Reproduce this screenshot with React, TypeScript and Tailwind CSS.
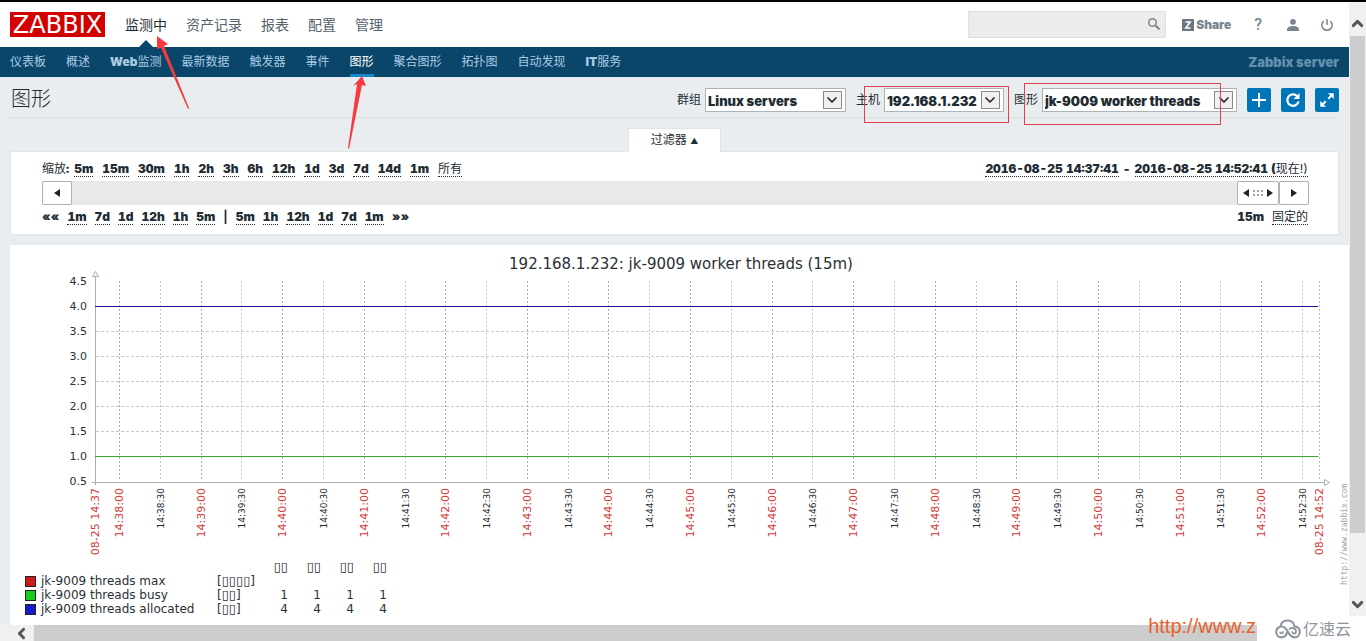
import { ChevronDown, ChevronLeft, ChevronUp } from 'lucide-react'

interface PickerProps {
  id: string;
  label: string;
  value: string;
  width: string;
  marked?: string;
}

const mainMenu = ['监测中', '资产记录', '报表', '配置', '管理']
const subMenu = ['仪表板', '概述', 'Web监测', '最新数据', '触发器', '事件', '图形', '聚合图形', '拓扑图', '自动发现', 'IT服务']
const zoomLinks = ['5m', '15m', '30m', '1h', '2h', '3h', '6h', '12h', '1d', '3d', '7d', '14d', '1m']
const backLinks = ['1m', '7d', '1d', '12h', '1h', '5m']
const forwardLinks = ['5m', '1h', '12h', '1d', '7d', '1m']

const legend = [
  { name: 'jk-9009 threads max', fn: '▯▯▯▯', color: 'bg-[#cc1a1a]', values: ['', '', '', ''] },
  { name: 'jk-9009 threads busy', fn: '▯▯', color: 'bg-[#1acc1a]', values: ['1', '1', '1', '1'] },
  { name: 'jk-9009 threads allocated', fn: '▯▯', color: 'bg-[#1a1acc]', values: ['4', '4', '4', '4'] },
]

// one tick every 30 seconds, 14:38:00 - 14:52:30
const ticks = Array.from({ length: 30 }, (_, i) => ({
  x: Math.round(109 + i * 40.79) + 0.5,
  major: i % 2 === 0,
  label: `14:${38 + Math.floor(i / 2)}:${i % 2 === 0 ? '00' : '30'}`,
}))

const yLabels = ['4.5', '4.0', '3.5', '3.0', '2.5', '2.0', '1.5', '1.0', '0.5']

function Picker({ id, label, value, width, marked }: PickerProps) {
  return (
    <div className="relative flex items-center gap-1">
      <label htmlFor={id} className="font-normal">{label}</label>
      <div className={`relative h-6 ${width}`}>
        <select id={id} className="h-full w-full appearance-none border border-[#acb3b8] bg-white pt-[2px] pl-[2px] text-[13px] outline-none">
          <option>{value}</option>
        </select>
        <span className="pointer-events-none absolute top-[3px] right-[4px] flex h-[18px] w-[19px] items-center justify-center border border-[#8a8a8a] bg-[#f0f0f0]">
          <ChevronDown size={16} strokeWidth={2.5} className="shrink-0 text-[#222]" />
        </span>
      </div>
      {marked && <span className={`pointer-events-none absolute border border-[#d9444f] ${marked}`} />}
    </div>
  )
}

function TimeLink({ text, suffix }: { text?: string; suffix?: string }) {
  return (
    <button className="h-4 cursor-pointer border-b border-dotted border-[#1f2c33] leading-[15px]">
      {text}
      {suffix && <span className="font-normal">{suffix}</span>}
    </button>
  )
}

function Graph() {
  return (
    <svg viewBox="0 0 1339 315" className="block w-full overflow-visible" fontFamily="'DejaVu Sans', sans-serif">
      <text x="671" y="24" textAnchor="middle" fontSize="15" fill="#2a3036">192.168.1.232: jk-9009 worker threads (15m)</text>

      {/* grid */}
      {yLabels.map((label, i) => (
        <g key={label}>
          {i > 1 && i < 8 && (
            <line x1="86" x2="1309" y1={36.5 + i * 25} y2={36.5 + i * 25} stroke="#c8c8c8" strokeDasharray="3 2" />
          )}
          <text x="77" y={40 + i * 25} textAnchor="end" fontSize="11" fill="#2a3036">{label}</text>
        </g>
      ))}
      {ticks.map(t => (
        <g key={t.label}>
          <line x1={t.x} x2={t.x} y1="36" y2="236" stroke={t.major ? '#ababab' : '#c8c8c8'} strokeDasharray="2 2" />
          <text
            transform={`translate(${t.x + 3} 243) rotate(-90)`}
            textAnchor="end"
            fontSize={t.major ? 11 : 9}
            fill={t.major ? '#d23a3a' : '#22282c'}
          >
            {t.label}
          </text>
        </g>
      ))}
      <line x1="1309.5" x2="1309.5" y1="36" y2="236" stroke="#b8b8b8" strokeDasharray="2 2" />
      <text transform="translate(89 243) rotate(-90)" textAnchor="end" fontSize="11" fill="#d23a3a">08-25 14:37</text>
      <text transform="translate(1313 243) rotate(-90)" textAnchor="end" fontSize="11" fill="#d23a3a">08-25 14:52</text>

      {/* axes */}
      <path d="M85.5 31V240M82 237.5H1314" stroke="#a3b0ba" fill="none" />
      <path d="M82.5 31.5L85.5 26.5L88.5 31.5Z" stroke="#a3b0ba" fill="#fff" />
      <path d="M1314.5 234.5L1319.5 237.5L1314.5 240.5Z" stroke="#a3b0ba" fill="#fff" />

      {/* values */}
      <line x1="85" x2="1308" y1="61.5" y2="61.5" stroke="#1a1490" />
      <line x1="85" x2="1308" y1="211.5" y2="211.5" stroke="#33aa33" />

      <text
        transform="translate(1337 340) rotate(-90)"
        fontSize="8"
        fontFamily="'DejaVu Sans Mono', monospace"
        fill="#a4a4a4"
      >
        http://www.zabbix.com
      </text>
    </svg>
  )
}

export default function App() {
  return (
    <div className="relative flex min-h-screen flex-col bg-[#e9edf0] font-[Inter,'Noto_Sans_CJK_SC',sans-serif] text-[12px] leading-4 font-black text-[#1f2c33]">
      <div className="h-[2px] bg-black" />
      <div className="flex flex-1">
        <div className="flex min-w-0 flex-1 flex-col">
          {/* Header */}
          <header className="flex h-[45px] items-center justify-between bg-white pr-[15px] pl-[10px]">
            <div className="flex items-center gap-5">
              <a href="#" className="flex h-[25px] w-[95px] items-center justify-center bg-[#d40000] font-['DejaVu_Sans',sans-serif] text-[24px] leading-6 font-normal text-white">ZABBIX</a>
              <nav className="flex gap-[19px] text-[14px] leading-5 font-normal text-[#55626c]">
                {mainMenu.map((item, i) => (
                  <a key={item} href="#" className={i === 0 ? 'relative text-[#1f2c33]' : ''}>
                    {item}
                    {i === 0 && (
                      <>
                        <svg width="16" height="8" className="absolute top-[25px] left-[13px]"><path d="M0 8L8 0L16 8Z" fill="#0a466a" /></svg>
                        <svg width="36" height="76" className="absolute top-[20px] left-[29px] z-10">
                          <path d="M3 1L14 9L10 11L35 73L34 74L7 13L3 14Z" fill="#f73a3f" />
                        </svg>
                      </>
                    )}
                  </a>
                ))}
              </nav>
            </div>
            <div className="flex items-center text-[#7a868f]">
              <div className="relative mr-4">
                <input type="text" aria-label="搜索" className="block h-[27px] w-[198px] border border-[#e0e0e0] bg-[#ececec] px-2 outline-none" />
                <svg width="14" height="14" viewBox="0 0 14 14" className="absolute top-[6px] right-[5px]" fill="none" stroke="#7a868f">
                  <circle cx="5.5" cy="5.5" r="3.8" strokeWidth="1.5" />
                  <path d="M8.5 8.5L12.5 12.5" strokeWidth="2" />
                </svg>
              </div>
              <a href="#" className="mr-[23px] flex items-center gap-[2px]">
                <svg width="12" height="12" viewBox="0 0 12 12">
                  <rect width="12" height="12" fill="#6c7881" />
                  <path d="M3.5 3H8.2L3.8 9H8.5" fill="none" stroke="#fff" strokeWidth="1.6" />
                </svg>
                Share
              </a>
              <a href="#" className="mr-6 font-[Roboto,sans-serif] text-[16px] leading-5 font-medium">?</a>
              <a href="#" aria-label="profile" className="mr-5">
                <svg width="14" height="14" viewBox="0 0 14 14" fill="#7a868f">
                  <circle cx="7" cy="3.8" r="2.9" />
                  <path d="M1 13V11.5C1 9 4 8 7 8S13 9 13 11.5V13Z" />
                </svg>
              </a>
              <a href="#" aria-label="logout">
                <svg width="14" height="14" viewBox="0 0 14 14" fill="none" stroke="#7a868f" strokeWidth="1.5">
                  <path d="M7 1V7M3.8 3A5.2 5.2 0 1 0 10.2 3" />
                </svg>
              </a>
            </div>
          </header>

          {/* Sub navigation */}
          <nav className="flex h-[30px] justify-between bg-[#0a466a] px-[10px] text-[#a9cbe2]">
            <div className="flex gap-5">
              {subMenu.map(item => (
                <a key={item} href="#" className={item === '图形' ? 'relative h-full border-b-3 border-[#1888cc] pt-[7px] text-white' : 'pt-[7px]'}>
                  {/^[A-Z]/.test(item) ? item.replace(/[^A-Za-z]/g, '') : ''}
                  <span className="font-normal">{item.replace(/[A-Za-z]/g, '')}</span>
                  {item === '图形' && (
                    <svg width="20" height="76" className="absolute top-[28px] left-[-3px] z-10">
                      <path d="M15 1L19 11L15 10L2 74L1 73L10 9L6 11Z" fill="#f73a3f" />
                    </svg>
                  )}
                </a>
              ))}
            </div>
            <span className="pt-[7px] text-[13px] text-[#6290ad]">Zabbix server</span>
          </nav>

          {/* Title and pickers */}
          <div className="mr-[10px] ml-2 flex h-[41px] items-center justify-between border-b border-[#dbe1e5] pb-1">
            <h1 className="ml-[3px] pt-2 text-[20px] leading-6 font-light">图形</h1>
            <div className="flex items-center gap-[10px] pt-[10px]">
              <Picker id="group" label="群组" value="Linux servers" width="w-[141px]" />
              <Picker id="host" label="主机" value="192.168.1.232" width="w-[120px]" marked="-top-[2px] -right-[5px] left-[8px] h-[37px]" />
              <Picker id="graph" label="图形" value="jk-9009 worker threads" width="w-[195px]" marked="-top-[5px] right-[16px] h-[42px] w-[197px]" />
              <button aria-label="add" className="flex size-6 items-center justify-center rounded-xs bg-[#0275b8]">
                <svg width="16" height="16" viewBox="0 0 16 16" stroke="#fff" strokeWidth="2"><path d="M8 1V15M1 8H15" /></svg>
              </button>
              <button aria-label="reset" className="flex size-6 items-center justify-center rounded-xs bg-[#0275b8]">
                <svg width="16" height="16" viewBox="0 0 16 16" fill="none" stroke="#fff" strokeWidth="2.2">
                  <path d="M13.6 9.5A5.7 5.7 0 1 1 12 4" />
                  <path d="M14.5 1V7H8.5Z" fill="#fff" stroke="none" />
                </svg>
              </button>
              <button aria-label="fullscreen" className="flex size-6 items-center justify-center rounded-xs bg-[#0275b8]">
                <svg width="16" height="16" viewBox="0 0 16 16" fill="#fff" stroke="#fff">
                  <path d="M9.5 1.5H14.5V6.5Z" strokeWidth="0.5" />
                  <path d="M1.5 9.5V14.5H6.5Z" strokeWidth="0.5" />
                  <path d="M12.5 3.5L9.3 6.7M3.5 12.5L6.7 9.3" strokeWidth="2" />
                </svg>
              </button>
            </div>
          </div>

          {/* Filter */}
          <section className="mr-[10px] ml-[10px] flex flex-col items-center pt-[10px]">
            <button className="relative -mb-px h-6 w-[93px] border border-b-0 border-[#dfe4e7] bg-white font-normal">
              过滤器 <span className="text-[8px]">▲</span>
            </button>
            <div className="h-[84px] w-full border border-[#dfe4e7] bg-white pt-[9px] pr-[30px] pl-[31px] tabular-nums">
              <div className="flex h-5 justify-between">
                <div className="flex gap-[9px]">
                  <span className="-mr-1"><span className="font-normal">缩放</span>:</span>
                  {zoomLinks.map(text => <TimeLink key={text} text={text} />)}
                  <TimeLink suffix="所有" />
                </div>
                <div className="flex gap-1">
                  <TimeLink text="2016-08-25 14:37:41" />
                  -
                  <TimeLink text="2016-08-25 14:52:41 (" suffix="现在!)" />
                </div>
              </div>
              <div className="-mr-px flex h-6 bg-[#e9e9e9]">
                <button aria-label="left" className="flex w-[30px] items-center justify-center rounded-xs border border-[#acb3b8] bg-white">
                  <svg width="6" height="8"><path d="M6 0V8L0 4Z" fill="#222" /></svg>
                </button>
                <button aria-label="range" className="ml-auto flex w-[42px] items-center justify-center gap-[4px] rounded-xs border border-[#acb3b8] bg-white">
                  <svg width="6" height="8"><path d="M6 0V8L0 4Z" fill="#222" /></svg>
                  <svg width="10" height="6" fill="#9aa3a9">
                    <path d="M0 0h2v2H0zM4 0h2v2H4zM8 0h2v2H8zM0 4h2v2H0zM4 4h2v2H4zM8 4h2v2H8z" />
                  </svg>
                  <svg width="6" height="8"><path d="M0 0V8L6 4Z" fill="#222" /></svg>
                </button>
                <button aria-label="right" className="flex w-[30px] items-center justify-center rounded-xs border border-[#acb3b8] bg-white">
                  <svg width="6" height="8"><path d="M0 0V8L6 4Z" fill="#222" /></svg>
                </button>
              </div>
              <div className="flex justify-between pt-1">
                <div className="flex gap-2">
                  <span>««</span>
                  {backLinks.map(text => <TimeLink key={text} text={text} />)}
                  <span className="font-bold">|</span>
                  {forwardLinks.map(text => <TimeLink key={text} text={text} />)}
                  <span>»»</span>
                </div>
                <div className="flex gap-2">
                  <span>15m</span>
                  <TimeLink suffix="固定的" />
                </div>
              </div>
            </div>
          </section>

          {/* Graph with legend */}
          <main className="mt-[10px] ml-[10px] flex-1 bg-white font-['DejaVu_Sans',sans-serif] text-[12px] leading-[14px] font-normal text-[#2a3036]">
            <Graph />
            <table className="ml-[15px] w-[362px] table-fixed border-collapse whitespace-nowrap">
              <thead>
                <tr className="h-[14px]">
                  <th className="w-[192px]" />
                  <th className="w-[38px]" />
                  {[0, 1, 2, 3].map(i => <th key={i} className="w-[33px] text-right text-[13px] leading-[14px] font-normal">▯▯</th>)}
                  <th />
                </tr>
              </thead>
              <tbody>
                {legend.map(row => (
                  <tr key={row.name} className="h-[14px]">
                    <td>
                      <span className="flex items-center gap-[5px]">
                        <i className={`size-[11px] border border-[#222] ${row.color}`} />
                        {row.name}
                      </span>
                    </td>
                    <td>[<span className="text-[13px] leading-3">{row.fn}</span>]</td>
                    {row.values.map((v, i) => <td key={i} className="text-right">{v}</td>)}
                    <td />
                  </tr>
                ))}
              </tbody>
            </table>
          </main>

          <div className="flex h-4 bg-[#f0f0f0]">
            <div className="flex w-[34px] items-center justify-end pr-1 text-[#555]">
              <ChevronLeft size={17} strokeWidth={4} />
            </div>
            <div className="flex-1 bg-[#cdcdcd]" />
          </div>
        </div>

        {/* Page scrollbar */}
        <aside className="flex w-[17px] flex-col items-center bg-[#f0f0f0] pb-[28px] text-[#555]">
          <div className="flex h-[34px] items-end pb-1"><ChevronUp size={17} strokeWidth={4} /></div>
          <div className="w-[15px] flex-1 bg-[#cdcdcd]" />
          <div className="flex h-[80px] items-end"><ChevronDown size={17} strokeWidth={4} /></div>
        </aside>
      </div>

      {/* Watermark */}
      <div className="absolute right-0 bottom-0 flex h-[25px] items-center font-normal">
        <span className="pr-px pb-[6px] font-['Liberation_Sans',sans-serif] text-[20px] leading-5 text-[#e9622b]">http://www.z</span>
        <div className="flex h-full w-[109px] items-center gap-[2px] bg-white pl-[18px] text-[16px] text-[#8f959f]">
          <svg width="26" height="20" viewBox="0 0 26 20" fill="none" stroke="#8f959f" strokeWidth="2.2" strokeLinecap="round">
            <path d="M5.5 7.5C6 3.5 9 1.5 12.5 1.5C16.5 1.5 19 4 19.5 7.5C23 7.8 24.8 10.2 24.8 13C24.8 16 22.5 18.3 19.5 18.3C16 18.3 14.5 15.5 13 13C11.5 10 9.5 7.5 6.5 7.5C3.5 7.5 1.2 10 1.2 13C1.2 16 3.5 18.3 6.5 18.3C9.5 18.3 11.8 16 11.8 13.5" />
            <path d="M8 13C8 14.5 6 14.8 5.3 13.5M14.5 10C16 7.8 21 9 21 12.5C21 15 17.5 15.2 17.3 13" strokeWidth="1.8" />
          </svg>
          亿速云
        </div>
      </div>
    </div>
  )
}
